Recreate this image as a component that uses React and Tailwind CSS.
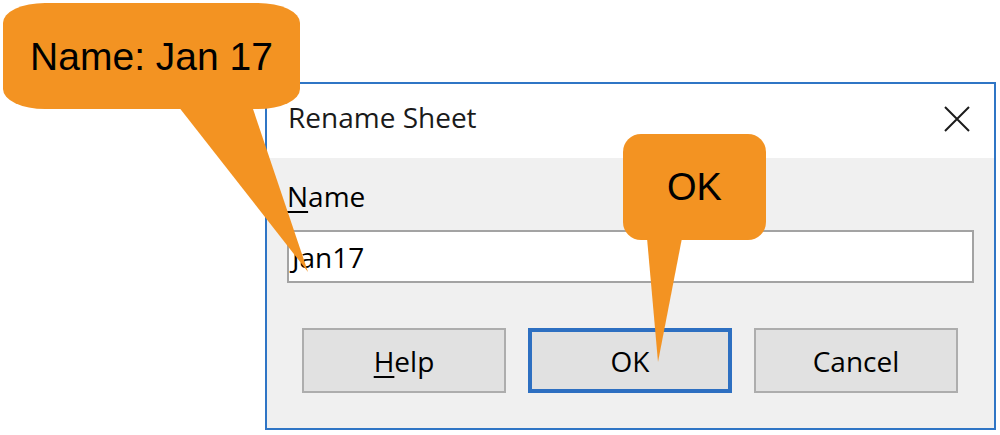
import React from "react";

const dialogFont = { fontFamily: '"Open Sans", "Noto Sans", sans-serif' };

const Button = ({ children, primary }) => (
    <div
        className={
            "flex h-[65px] w-[204px] items-center justify-center bg-[#e1e1e1] text-[28px] leading-none text-black " +
            (primary ? "border-4 border-[#2d6fc1]" : "border-2 border-[#adadad]")
        }
    >
        {children}
    </div>
);

const RenameDialog = () => (
    <div className="ml-[265px] mt-[82px] flex h-[348px] w-[731px] flex-col border-2 border-[#2f75c5] bg-[#f0f0f0]" style={dialogFont}>
        {/* barre de titre */}
        <div className="flex h-[74px] items-start justify-between bg-white pl-[21px] pr-[24px] pt-[19px]">
            <span className="text-[28px] leading-none text-[#1a1a1a]">Rename Sheet</span>
            <svg width="26" height="26" viewBox="0 0 26 26" className="mt-[3px]">
                <path d="M1 1 L25 25 M25 1 L1 25" stroke="#1b1b1b" strokeWidth="2" fill="none" />
            </svg>
        </div>

        <div className="flex flex-1 flex-col px-[20px] pt-[24px]">
            <span className="text-[28px] leading-none text-black">
                <u className="decoration-2 underline-offset-[4px]">N</u>ame
            </span>
            <div className="mt-[20px] flex h-[53px] items-center border-2 border-[#a3a3a3] bg-white pl-[3px] text-[28px] leading-none text-black">
                Jan17
            </div>
            <div className="mt-[45px] flex gap-[22px] px-[15px]">
                <Button>
                    <u className="decoration-2 underline-offset-[4px]">H</u>elp
                </Button>
                <Button primary>OK</Button>
                <Button>Cancel</Button>
            </div>
        </div>
    </div>
);

const Callout = ({ box, tail, radius, text, size }) => {
    const [x, y, w, h] = box;
    return (
        <>
            <svg className="pointer-events-none absolute left-0 top-0" width="1000" height="435">
                <rect x={x} y={y} width={w} height={h} rx={radius[0]} ry={radius[1]} fill="#f39322" />
                <polygon points={tail} fill="#f39322" />
            </svg>
            <div
                className="absolute flex items-center justify-center leading-none text-black"
                style={{ left: x, top: y, width: w, height: h, fontSize: size, fontFamily: '"Liberation Sans", Arial, sans-serif' }}
            >
                {text}
            </div>
        </>
    );
};

export default function App() {
    return (
        <div className="relative flow-root h-[435px] w-[1000px] overflow-hidden bg-white">
            <RenameDialog />
            <Callout box={[3, 3, 297, 106]} radius={[42, 20]} tail="178,106 252,106 308,272" text="Name: Jan 17" size={39} />
            <Callout box={[623, 134, 143, 106]} radius={[18, 18]} tail="647,238 682,238 658,362" text="OK" size={38} />
        </div>
    );
}
